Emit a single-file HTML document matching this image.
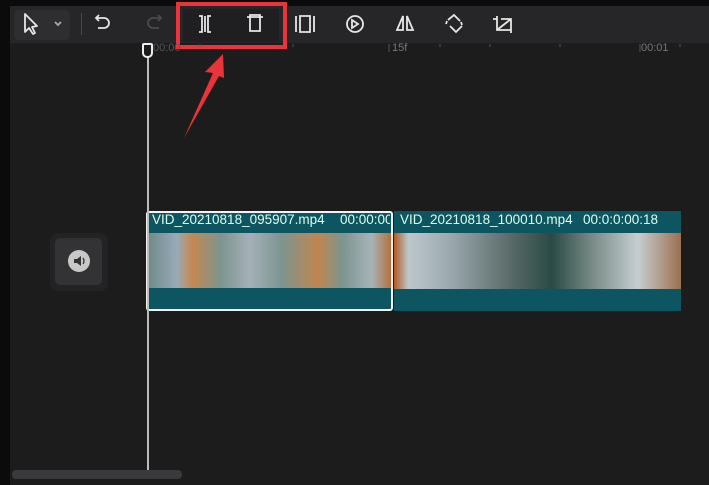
<!DOCTYPE html>
<html><head><style>
body{margin:0;width:709px;height:485px;overflow:hidden;background:#1c1c1d;position:relative;font-family:"Liberation Sans",sans-serif}
div{position:absolute;box-sizing:border-box}
</style></head><body>
<div style="left:0;top:0;width:709px;height:6px;background:#0b0b0c"></div>
<div style="left:0;top:0;width:10px;height:485px;background:#0b0b0c"></div>
<div style="left:10px;top:6px;width:699px;height:37px;background:#262628"></div>
<div style="left:14px;top:10px;width:56px;height:30px;background:#2e2e31;border-radius:5px"></div>
<div style="left:81px;top:13px;width:1px;height:22px;background:#4a4a4c"></div>
<div style="left:183px;top:9px;width:96px;height:33px;background:#1f1f22"></div>
<div style="left:176px;top:2px;width:111px;height:47px;border:4px solid #e8343a"></div>
<svg width="709" height="485" style="position:absolute;left:0;top:0" fill="none" stroke="#e6e6e6" stroke-width="1.8">
<path d="M25 14 L25 32 L29 28 L33 34 L35 33 L32 27 L37 26 Z" stroke-linejoin="round"/>
<path d="M55 22 l3 3 l3 -3" stroke="#aaa"/>
<path d="M99 15 l-3 3 l3 3 M96 18 h8 a5 5 0 0 1 0 10 h-6"/>
<path d="M158 15 l3 3 l-3 3 M161 18 h-8 a5 5 0 0 0 0 10 h6" stroke="#4a4a4c"/>
<path d="M199 16 h3 v16 h-3 M211 16 h-3 v16 h3 M205 16 v16"/>
<path d="M247 17 h16 M250 17 v-2 h10 v2 M250 17 v14 h10 v-14"/>
<path d="M296 16 v16 M314 16 v16 M300 16 h10 v16 h-10 z"/>
<circle cx="355" cy="24" r="8"/><path d="M352 20 l6 4 l-6 4 z"/>
<path d="M403 16 l-6 14 h6 z M407 16 l6 14 h-6 z"/>
<path d="M448 20 l6 -5 l6 6 M462 26 l-6 6 l-6 -6 M447 21 l-1 3 M462 25 l-1 -3"/>
<path d="M497 16 v14 h14 M501 19 h10 v14 M497 30 l14 -11 M493 19 h4"/>
<g stroke="#555" stroke-width="1"><path d="M389 44v8 M640 44v8 M293 44v3 M440 44v3 M490 44v3 M560 44v3 M680 44v3 M200 44v3"/></g>
</svg>
<div style="left:153px;top:42px;font-size:11px;color:#555">00:00</div>
<div style="left:392px;top:42px;font-size:11px;color:#777">15f</div>
<div style="left:641px;top:42px;font-size:11px;color:#777">00:01</div>
<div style="left:50px;top:233px;width:58px;height:58px;background:#232325;border-radius:8px"></div>
<div style="left:55px;top:238px;width:47px;height:47px;background:#333335;border-radius:5px"></div>
<div style="left:68px;top:250px;width:22px;height:22px;border-radius:50%;background:#c8c8c8"></div>
<svg width="20" height="20" style="position:absolute;left:69px;top:251px"><path d="M5 8h3l4-3v10l-4-3H5z" fill="#333"/><path d="M14 7q2 3 0 6" stroke="#333" fill="none" stroke-width="1.3"/></svg>
<div style="left:394px;top:211px;width:287px;height:100px;background:#0d5560"></div>
<div style="left:394px;top:233px;width:287px;height:56px;background:linear-gradient(90deg,#b35a25 0,#bcc8cc 5%,#9aa7ae 20%,#5b6c6a 40%,#2b4a45 55%,#7d8f8a 70%,#c6ced2 85%,#9c7050 100%)"></div>
<div style="left:400px;top:212px;font-size:13.5px;color:#dfe;">VID_20210818_100010.mp4</div>
<div style="left:583px;top:212px;font-size:13.5px;color:#dfe;">00:0:0:00:18</div>
<div style="left:146px;top:211px;width:247px;height:100px;background:#0d5560;border:2px solid #f2f2f2;border-radius:3px"></div>
<div style="left:148px;top:233px;width:243px;height:55px;background:linear-gradient(90deg,#6f8a86 0,#9ab 12%,#c58850 18%,#7c9590 30%,#a4b0b8 42%,#7c9590 55%,#c08550 70%,#7c9590 80%,#a7b3b8 92%,#b37040 100%)"></div>
<div style="left:152px;top:212px;font-size:13.5px;color:#dfe;">VID_20210818_095907.mp4</div>
<div style="left:340px;top:212px;font-size:13.5px;color:#dfe;white-space:nowrap;width:50px;overflow:hidden">00:00:00</div>
<div style="left:147px;top:56px;width:2px;height:414px;background:#bdbdbd"></div>
<div style="left:142px;top:43px;width:11px;height:15px;border:2px solid #eee;border-radius:2px 2px 5px 5px;background:#1c1c1d"></div>
<div style="left:12px;top:470px;width:170px;height:9px;background:#3a3a3c;border-radius:4px"></div>
<svg width="709" height="485" style="position:absolute;left:0;top:0"><polygon points="223,54 205,72 213,73 184,138 219,76 224,78" fill="#e8343a"/></svg>
</body></html>
